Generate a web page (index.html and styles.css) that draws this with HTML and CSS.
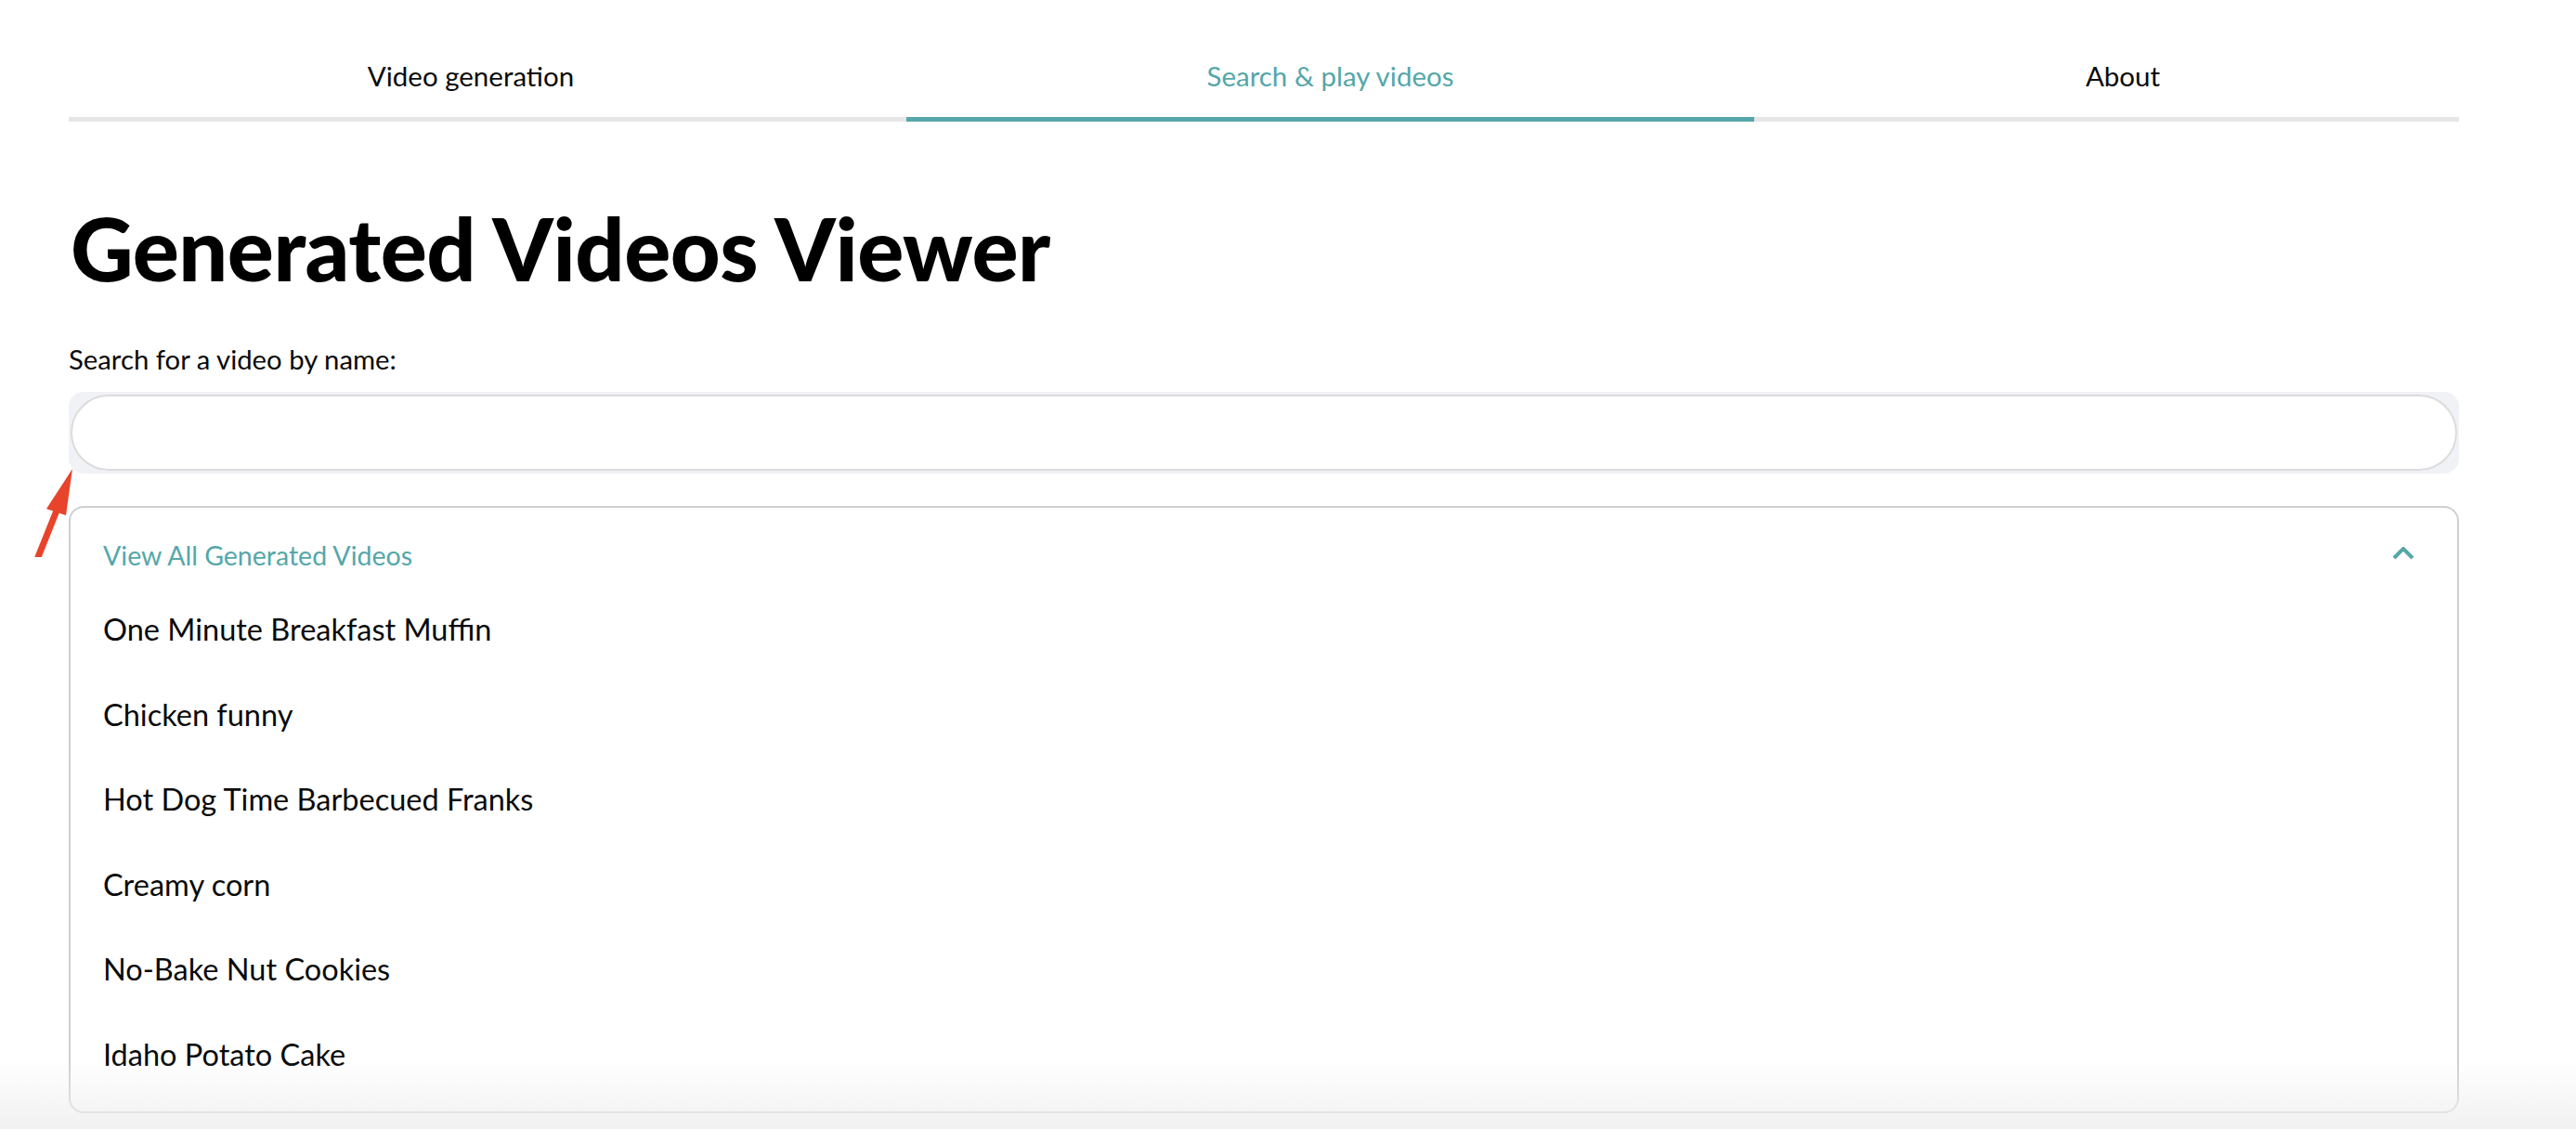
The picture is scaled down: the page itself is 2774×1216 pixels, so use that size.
FILE: index.html
```html
<!DOCTYPE html>
<html lang="en">
<head>
<meta charset="utf-8">
<title>Generated Videos Viewer</title>
<link rel="stylesheet" href="styles.css">
</head>
<body>
<div class="page">
  <nav class="tabs">
    <div class="tab tab-first">Video generation</div>
    <div class="tab tab-active">Search &amp; play videos</div>
    <div class="tab tab-last">About</div>
  </nav>

  <h1 class="title">Generated Videos Viewer</h1>

  <label class="field-label" for="search">Search for a video by name:</label>
  <div class="input-wrap">
    <input id="search" class="search-input" type="text">
  </div>

  <section class="expander">
    <div class="expander-header">
      <span class="expander-title">View All Generated Videos</span>
      <svg class="chevron" width="24" height="14" viewBox="0 0 24 14" aria-hidden="true">
        <polyline points="2,12 12,2 22,12" fill="none" stroke="#55a7aa" stroke-width="4"/>
      </svg>
    </div>
    <ul class="video-list">
      <li>One Minute Breakfast Muffin</li>
      <li>Chicken funny</li>
      <li>Hot Dog Time Barbecued Franks</li>
      <li>Creamy corn</li>
      <li>No-Bake Nut Cookies</li>
      <li>Idaho Potato Cake</li>
    </ul>
  </section>
</div>

<svg class="annotation-arrow" width="100" height="120" viewBox="0 0 100 120" aria-hidden="true">
  <line x1="39" y1="125" x2="63" y2="65" stroke="#e8432b" stroke-width="7" stroke-linecap="round"/>
  <polygon points="78,25 50,68 71,75" fill="#e8432b"/>
</svg>

<div class="bottom-fade"></div>
</body>
</html>
```

FILE: styles.css
```css
* {
  box-sizing: border-box;
}

html, body {
  margin: 0;
  padding: 0;
  background: #ffffff;
}

body {
  font-family: Lato, "Noto Sans", "Liberation Sans", sans-serif;
  color: #111111;
  overflow: hidden;
}

.page {
  padding: 0 126px 0 74px;
}

/* Tabs */
.tabs {
  display: grid;
  grid-template-columns: 902px 913px 1fr;
  border-bottom: 5px solid #e6e6e6;
  height: 131px;
}

.tab {
  height: 131px;
  margin-bottom: -5px;
  padding-top: 62px;
  font-size: 29.5px;
  line-height: 40px;
  text-align: center;
  color: #0a0a0a;
  border-bottom: 5px solid transparent;
}

.tab-first {
  padding-right: 36px;
}

.tab-last {
  padding-left: 35px;
}

.tab-active {
  color: #55a7aa;
  border-bottom-color: #55a7aa;
}

/* Title */
.title {
  margin: 81px 0 0 2px;
  font-size: 93.5px;
  line-height: 110px;
  font-weight: 900;
  color: #000000;
  letter-spacing: -0.5px;
}

/* Search */
.field-label {
  display: block;
  margin-top: 47px;
  font-size: 29.3px;
  line-height: 36px;
  color: #0a0a0a;
}

.input-wrap {
  margin-top: 17px;
  height: 88px;
  padding: 3px 2px 3px 2px;
  background: #f0f2f6;
  border-radius: 16px;
}

.search-input {
  display: block;
  width: 100%;
  height: 82px;
  border: 2px solid #dcdcdc;
  border-radius: 41px;
  background: #ffffff;
  outline: none;
  font-family: inherit;
  font-size: 30px;
  padding: 0 32px;
}

/* Expander */
.expander {
  margin-top: 35px;
  height: 654px;
  border: 2px solid #d0d0d0;
  border-radius: 16px;
  padding: 33px 46px 0 35px;
}

.expander-header {
  display: flex;
  justify-content: space-between;
  align-items: center;
  height: 36px;
}

.expander-title {
  font-size: 28.5px;
  line-height: 36px;
  color: #55a7aa;
}

.chevron {
  display: block;
  margin-top: -4px;
}

.video-list {
  list-style: none;
  margin: 42px 0 0 0;
  padding: 0;
  display: flex;
  flex-direction: column;
  gap: 51.6px;
}

.video-list li {
  font-size: 32.5px;
  line-height: 40px;
  color: #0a0a0a;
}

/* Annotation arrow overlays the page */
.annotation-arrow {
  position: absolute;
  left: 0;
  top: 480px;
}

/* Bottom fade overlay */
.bottom-fade {
  position: fixed;
  left: 0;
  right: 0;
  bottom: 0;
  height: 72px;
  background: linear-gradient(to bottom, rgba(240, 240, 240, 0), rgba(238, 238, 238, 0.85));
  pointer-events: none;
}
```
